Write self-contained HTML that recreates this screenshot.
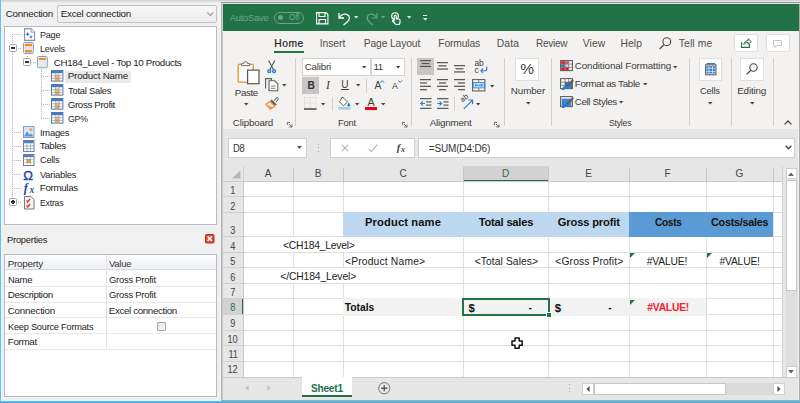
<!DOCTYPE html>
<html lang="en">
<head>
<meta charset="utf-8">
<title>Excel template editor</title>
<style>
html,body{margin:0;padding:0}
body{width:800px;height:403px;position:relative;overflow:hidden;background:#f0f0f0;font-family:"Liberation Sans",sans-serif;color:#222;font-size:9px}
.a{position:absolute;box-sizing:border-box}
.t{position:absolute;white-space:pre;line-height:1}
svg{position:absolute;overflow:visible}
.sep{position:absolute;width:1px;background:#d2d0ce;top:58px;height:68px}
.box{position:absolute;box-sizing:border-box;background:#fff;border:1px solid #c8c8c8}

</style>
</head>
<body>
<svg width="0" height="0" style="left:0;top:0"><defs><linearGradient id="og" x1="0" y1="0" x2="0" y2="1"><stop offset="0" stop-color="#fde3a4"/><stop offset="1" stop-color="#f39a12"/></linearGradient></defs></svg>
<div class="a" style="left:0px;top:0px;width:800px;height:2.5px;background:linear-gradient(#cdd1d7,#eeeff0)"></div>
<div class="a" style="left:0px;top:0px;width:1px;height:403px;background:#5fc2ea"></div>
<div class="a" style="left:1px;top:2px;width:1px;height:399px;background:#f7f1ef"></div>
<div class="a" style="left:0px;top:401.3px;width:800px;height:1.7px;background:linear-gradient(#6fcbf0,#34a0d8)"></div>
<span class="t" style="left:5.75px;top:8.75px;font-size:9.8px;letter-spacing:-0.232px;">Connection</span>
<div class="a" style="left:57px;top:5px;width:160px;height:18px;background:linear-gradient(#f7f7f7,#ededed);border:1px solid #c2c2c2;border-radius:2px"></div>
<span class="t" style="left:60.76px;top:8.75px;font-size:9.8px;letter-spacing:-0.239px;">Excel connection</span>
<svg style="left:206.6px;top:12.3px" width="6.6" height="4.4" viewBox="0 0 6.6 4.4"><path d="M0.4 0.5 L3.3 3.6 L6.2 0.5" fill="none" stroke="#9a9a9a" stroke-width="1.1"/></svg>
<div class="a" style="left:4px;top:26px;width:213px;height:199px;background:#fff;border:1px solid #b4bac6"></div>
<div class="a" style="left:12px;top:34px;width:1px;height:169px;background:repeating-linear-gradient(#bdbdbd 0 1px,#f4f4f4 1px 2px)"></div>
<div class="a" style="left:12px;top:34px;width:10px;height:1px;background:repeating-linear-gradient(90deg,#bdbdbd 0 1px,#f4f4f4 1px 2px)"></div>
<div class="a" style="left:12px;top:48px;width:10px;height:1px;background:repeating-linear-gradient(90deg,#bdbdbd 0 1px,#f4f4f4 1px 2px)"></div>
<div class="a" style="left:12px;top:132px;width:10px;height:1px;background:repeating-linear-gradient(90deg,#bdbdbd 0 1px,#f4f4f4 1px 2px)"></div>
<div class="a" style="left:12px;top:146px;width:10px;height:1px;background:repeating-linear-gradient(90deg,#bdbdbd 0 1px,#f4f4f4 1px 2px)"></div>
<div class="a" style="left:12px;top:160px;width:10px;height:1px;background:repeating-linear-gradient(90deg,#bdbdbd 0 1px,#f4f4f4 1px 2px)"></div>
<div class="a" style="left:12px;top:174px;width:10px;height:1px;background:repeating-linear-gradient(90deg,#bdbdbd 0 1px,#f4f4f4 1px 2px)"></div>
<div class="a" style="left:12px;top:188px;width:10px;height:1px;background:repeating-linear-gradient(90deg,#bdbdbd 0 1px,#f4f4f4 1px 2px)"></div>
<div class="a" style="left:12px;top:202px;width:10px;height:1px;background:repeating-linear-gradient(90deg,#bdbdbd 0 1px,#f4f4f4 1px 2px)"></div>
<div class="a" style="left:27px;top:56px;width:1px;height:6px;background:repeating-linear-gradient(#bdbdbd 0 1px,#f4f4f4 1px 2px)"></div>
<div class="a" style="left:31px;top:62px;width:5px;height:1px;background:repeating-linear-gradient(90deg,#bdbdbd 0 1px,#f4f4f4 1px 2px)"></div>
<div class="a" style="left:41px;top:69px;width:1px;height:50px;background:repeating-linear-gradient(#bdbdbd 0 1px,#f4f4f4 1px 2px)"></div>
<div class="a" style="left:41px;top:76px;width:9px;height:1px;background:repeating-linear-gradient(90deg,#bdbdbd 0 1px,#f4f4f4 1px 2px)"></div>
<div class="a" style="left:41px;top:90px;width:9px;height:1px;background:repeating-linear-gradient(90deg,#bdbdbd 0 1px,#f4f4f4 1px 2px)"></div>
<div class="a" style="left:41px;top:104px;width:9px;height:1px;background:repeating-linear-gradient(90deg,#bdbdbd 0 1px,#f4f4f4 1px 2px)"></div>
<div class="a" style="left:41px;top:118px;width:9px;height:1px;background:repeating-linear-gradient(90deg,#bdbdbd 0 1px,#f4f4f4 1px 2px)"></div>
<div class="a" style="left:9px;top:44px;width:8px;height:8px;background:#fff;border:1px solid #a6a6a6;border-radius:1.5px"></div>
<div class="a" style="left:10.8px;top:47.3px;width:4.4px;height:1.4px;background:#333"></div>
<div class="a" style="left:23px;top:58px;width:8px;height:8px;background:#fff;border:1px solid #a6a6a6;border-radius:1.5px"></div>
<div class="a" style="left:24.8px;top:61.3px;width:4.4px;height:1.4px;background:#333"></div>
<div class="a" style="left:9px;top:198px;width:8px;height:8px;background:#fff;border:1px solid #a6a6a6;border-radius:1.5px"></div>
<div class="a" style="left:10.8px;top:201.3px;width:4.4px;height:1.4px;background:#333"></div>
<div class="a" style="left:12.3px;top:199.8px;width:1.4px;height:4.4px;background:#333"></div>
<div class="a" style="left:65px;top:70.5px;width:66px;height:12.5px;background:#e9e9e9"></div>
<span class="t" style="left:39.76px;top:29.55px;font-size:9.8px;letter-spacing:-0.250px;color:#1e1e28;transform:scaleX(0.925);transform-origin:0 50%;">Page</span>
<span class="t" style="left:39.76px;top:43.65px;font-size:9.8px;letter-spacing:-0.250px;color:#1e1e28;transform:scaleX(0.923);transform-origin:0 50%;">Levels</span>
<span class="t" style="left:53.76px;top:57.55px;font-size:9.8px;letter-spacing:-0.383px;color:#1e1e28;">CH184_Level - Top 10 Products</span>
<span class="t" style="left:67.75px;top:71.45px;font-size:9.8px;letter-spacing:-0.194px;color:#1e1e28;">Product Name</span>
<span class="t" style="left:67.75px;top:85.55px;font-size:9.8px;letter-spacing:-0.250px;color:#1e1e28;transform:scaleX(0.957);transform-origin:0 50%;">Total Sales</span>
<span class="t" style="left:67.75px;top:99.55px;font-size:9.8px;letter-spacing:-0.384px;color:#1e1e28;">Gross Profit</span>
<span class="t" style="left:67.75px;top:113.65px;font-size:9.8px;letter-spacing:-0.250px;color:#1e1e28;transform:scaleX(0.893);transform-origin:0 50%;">GP%</span>
<span class="t" style="left:39.76px;top:127.65px;font-size:9.8px;letter-spacing:-0.250px;color:#1e1e28;transform:scaleX(0.955);transform-origin:0 50%;">Images</span>
<span class="t" style="left:39.76px;top:141.45px;font-size:9.8px;letter-spacing:-0.368px;color:#1e1e28;">Tables</span>
<span class="t" style="left:39.76px;top:155.45px;font-size:9.8px;letter-spacing:-0.250px;color:#1e1e28;transform:scaleX(0.938);transform-origin:0 50%;">Cells</span>
<span class="t" style="left:39.76px;top:169.55px;font-size:9.8px;letter-spacing:-0.250px;color:#1e1e28;transform:scaleX(0.957);transform-origin:0 50%;">Variables</span>
<span class="t" style="left:39.76px;top:183.45px;font-size:9.8px;letter-spacing:-0.336px;color:#1e1e28;">Formulas</span>
<span class="t" style="left:39.76px;top:197.55px;font-size:9.8px;letter-spacing:-0.250px;color:#1e1e28;transform:scaleX(0.886);transform-origin:0 50%;">Extras</span>
<svg style="left:24px;top:28px" width="11.2" height="13" viewBox="0 0 11.2 13"><path d="M0.6 0.6 H7 L10.6 4.2 V12.4 H0.6 Z" fill="#fff" stroke="#8391ad" stroke-width="1.1"/><path d="M7 0.6 V4.2 H10.6" fill="#e8ecf3" stroke="#8391ad" stroke-width="0.8"/><path d="M3.6 3.9 L4.2 5.6 L5.9 6.2 L4.2 6.8 L3.6 8.5 L3 6.8 L1.3 6.2 L3 5.6 Z M7 6.9 L7.5 8.4 L9 8.9 L7.5 9.4 L7 10.9 L6.5 9.4 L5 8.9 L6.5 8.4 Z" fill="#2a50c0"/></svg>
<svg style="left:23.3px;top:42.2px" width="10.8" height="12" viewBox="0 0 10.8 12"><rect x="0.5" y="0.5" width="9.8" height="11" rx="1.2" fill="#f1f4f9" stroke="#8d9bb3"/><rect x="1.7" y="1.7" width="7.4" height="2.5" rx="0.8" fill="#f08a24"/><rect x="1.7" y="7.9" width="7.4" height="2.5" rx="0.8" fill="#f08a24"/><path d="M1.6 5.4 h7.6 M1.6 6.8 h7.6" stroke="#c3ccdb" stroke-width="0.6"/></svg>
<svg style="left:37.3px;top:56.2px" width="10.8" height="12.3" viewBox="0 0 10.8 12.3"><rect x="0.5" y="0.5" width="9.8" height="11.3" rx="1.2" fill="#f1f4f9" stroke="#8d9bb3"/><rect x="1.7" y="1.7" width="7.4" height="2.4" rx="0.8" fill="#f08a24"/><path d="M1.6 5.5 h7.6 M1.6 7.2 h7.6 M1.6 8.9 h7.6 M1.6 10.4 h7.6" stroke="#cdd5e2" stroke-width="0.6"/></svg>
<svg style="left:50.6px;top:70px" width="12.4" height="11.6" viewBox="0 0 12.4 11.6"><rect x="0.5" y="0.5" width="11.4" height="10.6" fill="#fff" stroke="#5f7398"/><rect x="0.6" y="0.6" width="11.2" height="2.6" fill="#3f7ad6"/><rect x="4.3" y="3.2" width="3.8" height="7.6" fill="url(#og)"/><path d="M4.3 3.2 V11 M8.1 3.2 V11 M0.5 5.8 H11.9 M0.5 8.4 H11.9" stroke="#8b9ab5" stroke-width="0.7" fill="none"/></svg>
<svg style="left:50.6px;top:84px" width="12.4" height="11.6" viewBox="0 0 12.4 11.6"><rect x="0.5" y="0.5" width="11.4" height="10.6" fill="#fff" stroke="#5f7398"/><rect x="0.6" y="0.6" width="11.2" height="2.6" fill="#3f7ad6"/><rect x="4.3" y="3.2" width="3.8" height="7.6" fill="url(#og)"/><path d="M4.3 3.2 V11 M8.1 3.2 V11 M0.5 5.8 H11.9 M0.5 8.4 H11.9" stroke="#8b9ab5" stroke-width="0.7" fill="none"/></svg>
<svg style="left:50.6px;top:98px" width="12.4" height="11.6" viewBox="0 0 12.4 11.6"><rect x="0.5" y="0.5" width="11.4" height="10.6" fill="#fff" stroke="#5f7398"/><rect x="0.6" y="0.6" width="11.2" height="2.6" fill="#3f7ad6"/><rect x="4.3" y="3.2" width="3.8" height="7.6" fill="url(#og)"/><path d="M4.3 3.2 V11 M8.1 3.2 V11 M0.5 5.8 H11.9 M0.5 8.4 H11.9" stroke="#8b9ab5" stroke-width="0.7" fill="none"/></svg>
<svg style="left:50.6px;top:112px" width="12.4" height="11.6" viewBox="0 0 12.4 11.6"><rect x="0.5" y="0.5" width="11.4" height="10.6" fill="#fff" stroke="#5f7398"/><rect x="0.6" y="0.6" width="11.2" height="2.6" fill="#3f7ad6"/><rect x="4.3" y="3.2" width="3.8" height="7.6" fill="url(#og)"/><path d="M4.3 3.2 V11 M8.1 3.2 V11 M0.5 5.8 H11.9 M0.5 8.4 H11.9" stroke="#8b9ab5" stroke-width="0.7" fill="none"/></svg>
<svg style="left:23px;top:126px" width="11.5" height="12" viewBox="0 0 11.5 12"><rect x="0.5" y="0.5" width="10.5" height="11" fill="#d6e6f7" stroke="#7f9cc4"/><circle cx="7.8" cy="3.6" r="1.5" fill="#f3a64a"/><path d="M1 10.5 L4 5.5 L6.5 9 L8 7.5 L10.5 10.5 Z" fill="#5b8fd0"/></svg>
<svg style="left:23px;top:140px" width="11.5" height="12" viewBox="0 0 11.5 12"><rect x="0.5" y="0.5" width="10.5" height="11" fill="#fff" stroke="#6b7f9f"/><rect x="1" y="1" width="9.5" height="2.2" fill="#4d7fc9"/><path d="M4 3.2 V11.5 M7.5 3.2 V11.5 M0.5 6 H11 M0.5 8.7 H11" stroke="#8795ad" stroke-width="0.7" fill="none"/></svg>
<svg style="left:23px;top:154px" width="11.5" height="12" viewBox="0 0 11.5 12"><rect x="0.5" y="0.5" width="10.5" height="11" fill="#fff" stroke="#6b7f9f"/><rect x="1" y="1" width="9.5" height="2.2" fill="#4d7fc9"/><path d="M4 3.2 V11.5 M7.6 3.2 V11.5 M0.5 5.6 H11 M0.5 8.6 H11" stroke="#aab4c6" stroke-width="0.6" fill="none"/><rect x="4" y="5.6" width="3.6" height="3" fill="#f4a528" stroke="#b5741a" stroke-width="0.6"/></svg>
<span class="t" style="left:23.34px;top:168.58px;font-size:13px;color:#2343ad;-webkit-text-stroke:0.35px #2343ad;">Ω</span>
<span class="t" style="left:23.80px;top:182.04px;font-size:12.2px;font-weight:700;color:#1f3fa8;font-family:'Liberation Serif', serif;font-style:italic;">f</span>
<span class="t" style="left:29.60px;top:184.97px;font-size:9.6px;font-weight:700;color:#1f3fa8;font-family:'Liberation Serif', serif;font-style:italic;">x</span>
<svg style="left:24px;top:196px" width="10.5" height="13.5" viewBox="0 0 10.5 13.5"><path d="M0.5 0.5 H7 L10 3.5 V13 H0.5 Z" fill="#f4f4f4" stroke="#777"/><path d="M2.5 4.5 l1.2 1.5 l2.3 -3 M2.5 9.5 l1.2 1.5 l2.3 -3" fill="none" stroke="#d23a1e" stroke-width="1.3"/></svg>
<span class="t" style="left:6.75px;top:234.95px;font-size:9.8px;letter-spacing:-0.250px;transform:scaleX(0.955);transform-origin:0 50%;">Properties</span>
<svg style="left:205px;top:234px" width="9.5" height="9.5" viewBox="0 0 9.5 9.5"><rect x="0.5" y="0.5" width="8.5" height="8.5" rx="1" fill="#d9503a" stroke="#a83220"/><path d="M2.6 2.6 L6.9 6.9 M6.9 2.6 L2.6 6.9" stroke="#fff" stroke-width="1.4"/></svg>
<div class="a" style="left:4px;top:254px;width:213px;height:143px;background:#fff;border:1px solid #b4bac6"></div>
<div class="a" style="left:5px;top:255px;width:211px;height:15px;background:linear-gradient(#fdfdfe,#eef0f4);border-bottom:1px solid #d5d9e0"></div>
<div class="a" style="left:106px;top:255px;width:1px;height:94px;background:#dfe2e8"></div>
<div class="a" style="left:5px;top:286px;width:211px;height:1px;background:#e8e8ec"></div>
<div class="a" style="left:5px;top:302px;width:211px;height:1px;background:#e8e8ec"></div>
<div class="a" style="left:5px;top:317px;width:211px;height:1px;background:#e8e8ec"></div>
<div class="a" style="left:5px;top:333px;width:211px;height:1px;background:#e8e8ec"></div>
<div class="a" style="left:5px;top:349px;width:211px;height:1px;background:#e8e8ec"></div>
<span class="t" style="left:7.75px;top:258.85px;font-size:9.8px;letter-spacing:-0.220px;color:#333;">Property</span>
<span class="t" style="left:108.75px;top:258.85px;font-size:9.8px;letter-spacing:-0.250px;color:#333;transform:scaleX(0.963);transform-origin:0 50%;">Value</span>
<span class="t" style="left:7.75px;top:274.55px;font-size:9.8px;letter-spacing:-0.250px;color:#1e1e28;transform:scaleX(0.965);transform-origin:0 50%;">Name</span>
<span class="t" style="left:7.75px;top:290.25px;font-size:9.8px;letter-spacing:-0.353px;color:#1e1e28;">Description</span>
<span class="t" style="left:7.75px;top:305.75px;font-size:9.8px;letter-spacing:-0.232px;color:#1e1e28;">Connection</span>
<span class="t" style="left:7.75px;top:321.55px;font-size:9.8px;letter-spacing:-0.250px;color:#1e1e28;transform:scaleX(0.942);transform-origin:0 50%;">Keep Source Formats</span>
<span class="t" style="left:7.75px;top:337.25px;font-size:9.8px;letter-spacing:-0.308px;color:#1e1e28;">Format</span>
<span class="t" style="left:108.75px;top:274.55px;font-size:9.8px;letter-spacing:-0.250px;color:#1e1e28;transform:scaleX(0.960);transform-origin:0 50%;">Gross Profit</span>
<span class="t" style="left:108.75px;top:290.25px;font-size:9.8px;letter-spacing:-0.250px;color:#1e1e28;transform:scaleX(0.960);transform-origin:0 50%;">Gross Profit</span>
<span class="t" style="left:108.75px;top:305.75px;font-size:9.8px;letter-spacing:-0.373px;color:#1e1e28;">Excel connection</span>
<div class="a" style="left:156.5px;top:322px;width:9px;height:9px;background:linear-gradient(135deg,#e4e4e4,#f8f8f8);border:1px solid #a8a8a8;border-radius:1px"></div>
<div class="a" style="left:221px;top:2px;width:579px;height:1px;background:#9c9c9c"></div>
<div class="a" style="left:221px;top:3px;width:579px;height:1px;background:#e4dede"></div>
<div class="a" style="left:221px;top:2px;width:1px;height:399px;background:#b4b4b4"></div>
<div class="a" style="left:222px;top:3px;width:1px;height:398px;background:#cdc8c8"></div>
<div class="a" style="left:223px;top:4px;width:577px;height:27px;background:#217346"></div>
<div class="a" style="left:223px;top:31px;width:577px;height:98px;background:#f3f2f1"></div>
<div class="a" style="left:223px;top:129px;width:577px;height:37px;background:#e6e6e6"></div>
<div class="a" style="left:221px;top:400px;width:579px;height:1px;background:#a6a6a6"></div>
<span class="t" style="left:229.76px;top:12.69px;font-size:9.4px;letter-spacing:-0.241px;color:#6aa683;">AutoSave</span>
<div class="a" style="left:274px;top:11.5px;width:30px;height:12px;border:1px solid #6aa683;border-radius:6px"></div>
<div class="a" style="left:278px;top:15px;width:5px;height:5px;background:#6aa683;border-radius:3px"></div>
<span class="t" style="left:289.10px;top:14.29px;font-size:8.2px;letter-spacing:-0.236px;color:#6aa683;">Off</span>
<svg style="left:315.5px;top:12px" width="12.5" height="12.5" viewBox="0 0 12.5 12.5"><path d="M0.6 0.6 H10 L11.9 2.5 V11.9 H0.6 Z" fill="none" stroke="#fff" stroke-width="1.1"/><path d="M3 0.6 V4.5 H9 V0.6" fill="none" stroke="#fff" stroke-width="1.1"/><path d="M3 11.9 V7.5 H9.5 V11.9" fill="none" stroke="#fff" stroke-width="1.1"/></svg>
<svg style="left:338px;top:11.5px" width="13" height="13.5" viewBox="0 0 13 13.5"><path d="M1 1 V6 H6" fill="none" stroke="#fff" stroke-width="1.3"/><path d="M1.3 5.7 C3.5 1.8 8.5 0.8 10.8 3.8 C12.8 6.6 10.5 9.5 5.5 13" fill="none" stroke="#fff" stroke-width="1.3"/></svg>
<svg style="left:353.675px;top:16.3675px" width="4.25" height="2.465" viewBox="0 0 4.25 2.465"><path d="M0 0 H4.25 L2.125 2.465 Z" fill="#fff"/></svg>
<svg style="left:366px;top:11.5px" width="12" height="13.5" viewBox="0 0 12 13.5"><path d="M11 1 V6 H6" fill="none" stroke="#6aa683" stroke-width="1.2"/><path d="M10.7 5.7 C8.5 1.8 3.5 0.8 1.7 3.8 C0 6.6 2 9.5 6.5 13" fill="none" stroke="#6aa683" stroke-width="1.2"/></svg>
<svg style="left:381.175px;top:16.3675px" width="4.25" height="2.465" viewBox="0 0 4.25 2.465"><path d="M0 0 H4.25 L2.125 2.465 Z" fill="#6aa683"/></svg>
<svg style="left:391px;top:12px" width="10" height="13" viewBox="0 0 10 13"><circle cx="4" cy="4" r="3.3" fill="none" stroke="#fff" stroke-width="1.1"/><path d="M3.2 9.5 V4 a1 1 0 0 1 2 0 V7 h2.5 a1.3 1.3 0 0 1 1.3 1.3 V10.5 a2 2 0 0 1 -2 2 H4.8 L1.5 9 a0.9 0.9 0 0 1 1.7 -0.5 Z" fill="#217346" stroke="#fff" stroke-width="1.1"/></svg>
<svg style="left:406.675px;top:16.3675px" width="4.25" height="2.465" viewBox="0 0 4.25 2.465"><path d="M0 0 H4.25 L2.125 2.465 Z" fill="#fff"/></svg>
<div class="a" style="left:422.6px;top:15.2px;width:4.8px;height:1.1px;background:#fff"></div>
<svg style="left:422.75px;top:17.895px" width="4.5" height="2.61" viewBox="0 0 4.5 2.61"><path d="M0 0 H4.5 L2.25 2.61 Z" fill="#fff"/></svg>
<span class="t" style="left:274.24px;top:38.86px;font-size:10.3px;letter-spacing:0.515px;color:#252423;-webkit-text-stroke:0.2px #252423;">Home</span>
<div class="a" style="left:274px;top:51px;width:29.5px;height:2px;background:#217346"></div>
<span class="t" style="left:319.74px;top:38.86px;font-size:10.3px;letter-spacing:-0.050px;color:#4f4d4b;">Insert</span>
<span class="t" style="left:363.74px;top:38.86px;font-size:10.3px;letter-spacing:-0.131px;color:#4f4d4b;">Page Layout</span>
<span class="t" style="left:438.24px;top:38.86px;font-size:10.3px;letter-spacing:-0.130px;color:#4f4d4b;">Formulas</span>
<span class="t" style="left:496.74px;top:38.86px;font-size:10.3px;letter-spacing:0.150px;color:#4f4d4b;">Data</span>
<span class="t" style="left:536.14px;top:38.86px;font-size:10.3px;letter-spacing:-0.250px;color:#4f4d4b;transform:scaleX(0.972);transform-origin:0 50%;">Review</span>
<span class="t" style="left:582.74px;top:38.86px;font-size:10.3px;letter-spacing:0.125px;color:#4f4d4b;">View</span>
<span class="t" style="left:620.44px;top:38.86px;font-size:10.3px;letter-spacing:0.109px;color:#4f4d4b;">Help</span>
<span class="t" style="left:678.74px;top:38.86px;font-size:10.3px;letter-spacing:0.148px;color:#4f4d4b;">Tell me</span>
<svg style="left:658.5px;top:37px" width="12.5" height="12.5" viewBox="0 0 12.5 12.5"><circle cx="7.8" cy="4.7" r="3.9" fill="none" stroke="#444" stroke-width="1.1"/><path d="M5 7.6 L0.6 12" stroke="#444" stroke-width="1.3"/></svg>
<div class="a" style="left:734px;top:34px;width:24px;height:18px;background:#fff;border:1px solid #e1dfdd;border-radius:2px"></div>
<svg style="left:740.5px;top:38px" width="11" height="10" viewBox="0 0 11 10"><path d="M0.6 4 V9.4 H8.4 V6" fill="none" stroke="#217346" stroke-width="1.1"/><path d="M2.8 6.5 C3.2 3.8 5 2.8 7 2.8 V0.8 L10.3 3.6 L7 6.3 V4.4 C5.2 4.3 3.8 4.9 2.8 6.5 Z" fill="none" stroke="#217346" stroke-width="1"/></svg>
<div class="a" style="left:765.5px;top:34px;width:24px;height:18px;background:#fff;border:1px solid #e1dfdd;border-radius:2px"></div>
<svg style="left:773px;top:39.5px" width="9" height="8" viewBox="0 0 9 8"><path d="M0.5 0.5 H8.5 V5.5 H4 L2 7.5 V5.5 H0.5 Z" fill="none" stroke="#c8c6c4" stroke-width="1"/></svg>
<div class="sep" style="left:295px"></div>
<div class="sep" style="left:410.5px"></div>
<div class="sep" style="left:503.5px"></div>
<div class="sep" style="left:551px"></div>
<div class="sep" style="left:689px"></div>
<div class="sep" style="left:731px"></div>
<div class="sep" style="left:773px"></div>
<svg style="left:237px;top:60px" width="23" height="25" viewBox="0 0 23 25"><rect x="1.2" y="4.2" width="15" height="18" rx="1" fill="#fbfbfb" stroke="#eda041" stroke-width="1.5"/><path d="M4.6 5.6 V3.6 H6.6 a2 2 0 0 1 4 0 H12.6 V5.6 Z" fill="#fff" stroke="#605e5c" stroke-width="0.9"/><rect x="10.6" y="10.1" width="11.4" height="13.6" fill="#fff" stroke="#555" stroke-width="1.2"/></svg>
<span class="t" style="left:234.75px;top:87.65px;font-size:9.8px;letter-spacing:-0.393px;color:#3b3a39;">Paste</span>
<svg style="left:244.05px;top:102.995px" width="4.5" height="2.61" viewBox="0 0 4.5 2.61"><path d="M0 0 H4.5 L2.25 2.61 Z" fill="#444"/></svg>
<svg style="left:266.8px;top:59.8px" width="9.4" height="13.6" viewBox="0 0 9.4 13.6"><path d="M1.6 0.4 L6.4 9.6 M7.8 0.4 L3 9.6" stroke="#555" stroke-width="1.05" fill="none"/><circle cx="2.3" cy="11.2" r="1.5" fill="#9cc3ee" stroke="#2b7cd3" stroke-width="1.2"/><circle cx="7.1" cy="11.2" r="1.5" fill="#9cc3ee" stroke="#2b7cd3" stroke-width="1.2"/></svg>
<svg style="left:265px;top:78px" width="13.5" height="13.5" viewBox="0 0 13.5 13.5"><path d="M3.5 2.5 V0.6 H8 M0.6 0.6 H3.5" fill="none" stroke="#605e5c" stroke-width="0"/><path d="M0.6 10.5 V0.6 H6.5 V2.8" fill="none" stroke="#605e5c" stroke-width="1.1"/><path d="M4 2.8 H9.8 L12.8 5.8 V12.8 H4 Z" fill="#fff" stroke="#605e5c" stroke-width="1.1"/><path d="M6 8 h4.5 M6 10.3 h4.5" stroke="#605e5c" stroke-width="0.8"/></svg>
<svg style="left:281.75px;top:83.995px" width="4.5" height="2.61" viewBox="0 0 4.5 2.61"><path d="M0 0 H4.5 L2.25 2.61 Z" fill="#444"/></svg>
<svg style="left:265px;top:96.5px" width="14" height="13" viewBox="0 0 14 13"><path d="M9.2 3.6 L11.2 1 a1.2 1.2 0 0 1 1.9 1.4 L11 5.2" fill="#f3f2f1" stroke="#555" stroke-width="1"/><path d="M6.6 2.6 L11.6 7.4 L10.2 8.8 L5.2 4 Z" fill="#555"/><path d="M5 4.4 L9.8 9.2 L5.4 12.2 L0.8 7.4 Z" fill="#fbe3c8" stroke="#e8852c" stroke-width="1.1"/><path d="M1.2 7.4 L5.4 11.8 L7.6 10.4 Z" fill="#ef9a47"/></svg>
<span class="t" style="left:232.75px;top:118.15px;font-size:9.8px;letter-spacing:-0.181px;color:#3b3a39;">Clipboard</span>
<svg style="left:286.5px;top:121.5px" width="5.5" height="5.5" viewBox="0 0 5.5 5.5"><path d="M0.4 3 V0.4 H3" fill="none" stroke="#605e5c" stroke-width="0.9"/><path d="M2 2 L5 5 M5 2.4 V5 H2.4" fill="none" stroke="#605e5c" stroke-width="0.9"/></svg>
<svg style="left:401.5px;top:121.5px" width="5.5" height="5.5" viewBox="0 0 5.5 5.5"><path d="M0.4 3 V0.4 H3" fill="none" stroke="#605e5c" stroke-width="0.9"/><path d="M2 2 L5 5 M5 2.4 V5 H2.4" fill="none" stroke="#605e5c" stroke-width="0.9"/></svg>
<svg style="left:494px;top:121.5px" width="5.5" height="5.5" viewBox="0 0 5.5 5.5"><path d="M0.4 3 V0.4 H3" fill="none" stroke="#605e5c" stroke-width="0.9"/><path d="M2 2 L5 5 M5 2.4 V5 H2.4" fill="none" stroke="#605e5c" stroke-width="0.9"/></svg>
<div class="box" style="left:302px;top:58px;width:69px;height:18px;border-color:#d6d4d2;"></div>
<div class="box" style="left:370.5px;top:58px;width:34px;height:18px;border-color:#d6d4d2;"></div>
<span class="t" style="left:304.75px;top:62.25px;font-size:9.8px;letter-spacing:-0.213px;color:#3b3a39;">Calibri</span>
<span class="t" style="left:373.60px;top:62.25px;font-size:9.8px;color:#3b3a39;letter-spacing:-0.6px;">11</span>
<svg style="left:362.113px;top:66.3312px" width="4.375" height="2.5375" viewBox="0 0 4.375 2.5375"><path d="M0 0 H4.375 L2.1875 2.5375 Z" fill="#444"/></svg>
<svg style="left:395.613px;top:66.3312px" width="4.375" height="2.5375" viewBox="0 0 4.375 2.5375"><path d="M0 0 H4.375 L2.1875 2.5375 Z" fill="#444"/></svg>
<div class="a" style="left:302px;top:77px;width:17.3px;height:16.8px;background:#c8c6c4"></div>
<span class="t" style="left:307.52px;top:80.52px;font-size:10.2px;font-weight:700;color:#333;">B</span>
<span class="t" style="left:326.06px;top:79.80px;font-size:11.6px;color:#3b3a39;font-family:'Liberation Serif', serif;font-style:italic;">I</span>
<span class="t" style="left:341.18px;top:80.34px;font-size:10px;color:#3b3a39;">U</span>
<div class="a" style="left:340.8px;top:89px;width:8.2px;height:1px;background:#3b3a39"></div>
<svg style="left:355.613px;top:84.0312px" width="4.375" height="2.5375" viewBox="0 0 4.375 2.5375"><path d="M0 0 H4.375 L2.1875 2.5375 Z" fill="#444"/></svg>
<div class="a" style="left:366px;top:79px;width:1px;height:14px;background:#d2d0ce"></div>
<span class="t" style="left:374.56px;top:80.76px;font-size:10.3px;color:#3b3a39;">A</span>
<svg style="left:380.3px;top:79.5px" width="4.5" height="3" viewBox="0 0 4.5 3"><path d="M0.4 2.6 L2.25 0.6 L4.1 2.6" fill="none" stroke="#2b7cd3" stroke-width="1"/></svg>
<span class="t" style="left:392.06px;top:82.04px;font-size:8.8px;color:#3b3a39;">A</span>
<svg style="left:398px;top:79.5px" width="4.5" height="3" viewBox="0 0 4.5 3"><path d="M0.4 0.4 L2.25 2.4 L4.1 0.4" fill="none" stroke="#2b7cd3" stroke-width="1"/></svg>
<svg style="left:304px;top:96.5px" width="12.5" height="13" viewBox="0 0 12.5 13"><path d="M0.5 0.5 H12 M0.5 6 H12 M0.5 0.5 V11 M6.2 0.5 V11 M12 0.5 V11" stroke="#c8c6c4" stroke-width="0.7" stroke-dasharray="1 1" fill="none"/><path d="M0 12 H12.5" stroke="#3b3a39" stroke-width="1.4"/></svg>
<svg style="left:321.113px;top:103.031px" width="4.375" height="2.5375" viewBox="0 0 4.375 2.5375"><path d="M0 0 H4.375 L2.1875 2.5375 Z" fill="#444"/></svg>
<div class="a" style="left:332px;top:97px;width:1px;height:14px;background:#d2d0ce"></div>
<svg style="left:338px;top:96px" width="13" height="14" viewBox="0 0 13 14"><path d="M4.5 1 L9.5 6 L5.5 9.8 L1.5 5.8 Z" fill="#fff" stroke="#605e5c" stroke-width="1"/><path d="M4.5 1 L3 2.6" stroke="#605e5c" stroke-width="1"/><path d="M10.8 6.5 c1 1.5 1.3 2.2 1.3 2.8 a1.3 1.3 0 0 1 -2.6 0 c0 -0.6 0.4 -1.3 1.3 -2.8Z" fill="#2b7cd3"/><rect x="0" y="11" width="12.5" height="2.6" fill="#a9cdf0"/></svg>
<svg style="left:355.113px;top:103.031px" width="4.375" height="2.5375" viewBox="0 0 4.375 2.5375"><path d="M0 0 H4.375 L2.1875 2.5375 Z" fill="#444"/></svg>
<span class="t" style="left:367.40px;top:97.27px;font-size:10.8px;color:#3b3a39;">A</span>
<div class="a" style="left:364.5px;top:107px;width:12.5px;height:2.8px;background:#f5000f"></div>
<svg style="left:381.312px;top:103.031px" width="4.375" height="2.5375" viewBox="0 0 4.375 2.5375"><path d="M0 0 H4.375 L2.1875 2.5375 Z" fill="#444"/></svg>
<span class="t" style="left:337.75px;top:118.15px;font-size:9.8px;letter-spacing:-0.250px;color:#3b3a39;transform:scaleX(0.954);transform-origin:0 50%;">Font</span>
<div class="a" style="left:417px;top:57.8px;width:17px;height:17.5px;background:#c8c6c4"></div>
<svg style="left:420px;top:60px" width="11" height="12" viewBox="0 0 11 12"><rect x="0" y="0" width="11" height="1.25" fill="#595755"/><rect x="1.5" y="2.9" width="8" height="1.25" fill="#595755"/><rect x="0" y="5.8" width="11" height="1.25" fill="#595755"/></svg>
<svg style="left:437px;top:62px" width="11" height="12" viewBox="0 0 11 12"><rect x="0" y="0" width="11" height="1.25" fill="#595755"/><rect x="1.5" y="3.2" width="8" height="1.25" fill="#595755"/><rect x="0" y="6.4" width="11" height="1.25" fill="#595755"/></svg>
<svg style="left:454px;top:65.3px" width="11" height="12" viewBox="0 0 11 12"><rect x="0" y="0" width="11" height="1.25" fill="#595755"/><rect x="1.5" y="3.15" width="8" height="1.25" fill="#595755"/><rect x="0" y="6.3" width="11" height="1.25" fill="#595755"/></svg>
<span class="t" style="left:474.40px;top:59.37px;font-size:8.4px;color:#3b3a39;">ab</span>
<span class="t" style="left:474.40px;top:65.87px;font-size:8.4px;color:#3b3a39;">c</span>
<svg style="left:479.5px;top:65.5px" width="8" height="8" viewBox="0 0 8 8"><path d="M6.8 0.5 V3.2 a1.5 1.5 0 0 1 -1.5 1.5 H1.2" fill="none" stroke="#2b7cd3" stroke-width="1.1"/><path d="M3 2.5 L0.9 4.7 L3 6.9" fill="none" stroke="#2b7cd3" stroke-width="1.1"/></svg>
<svg style="left:420px;top:78.9px" width="11" height="12" viewBox="0 0 11 12"><rect x="0" y="0" width="11" height="1.25" fill="#595755"/><rect x="0" y="3.35" width="7" height="1.25" fill="#595755"/><rect x="0" y="6.7" width="11" height="1.25" fill="#595755"/><rect x="0" y="10.05" width="7" height="1.25" fill="#595755"/></svg>
<svg style="left:437px;top:78.9px" width="11" height="12" viewBox="0 0 11 12"><rect x="0" y="0" width="11" height="1.25" fill="#595755"/><rect x="2" y="3.35" width="7" height="1.25" fill="#595755"/><rect x="0" y="6.7" width="11" height="1.25" fill="#595755"/><rect x="2" y="10.05" width="7" height="1.25" fill="#595755"/></svg>
<svg style="left:454px;top:78.9px" width="11" height="12" viewBox="0 0 11 12"><rect x="0" y="0" width="11" height="1.25" fill="#595755"/><rect x="4" y="3.35" width="7" height="1.25" fill="#595755"/><rect x="0" y="6.7" width="11" height="1.25" fill="#595755"/><rect x="4" y="10.05" width="7" height="1.25" fill="#595755"/></svg>
<svg style="left:472px;top:79px" width="13.5" height="12.5" viewBox="0 0 13.5 12.5"><rect x="0.6" y="0.6" width="12.3" height="11.3" fill="#fff" stroke="#605e5c" stroke-width="1.1"/><rect x="1.2" y="3.6" width="11.1" height="5.3" fill="#cfe3f7" stroke="#2b7cd3" stroke-width="0.9"/><path d="M3 6.25 H10.5 M4.5 4.9 L3 6.25 L4.5 7.6 M9 4.9 L10.5 6.25 L9 7.6" stroke="#2b7cd3" stroke-width="0.9" fill="none"/><path d="M6.75 0.6 V3.4 M6.75 9 V11.8" stroke="#605e5c" stroke-width="0.8"/></svg>
<svg style="left:489.812px;top:85.0312px" width="4.375" height="2.5375" viewBox="0 0 4.375 2.5375"><path d="M0 0 H4.375 L2.1875 2.5375 Z" fill="#444"/></svg>
<svg style="left:420px;top:98px" width="11.5" height="11" viewBox="0 0 11.5 11"><path d="M0 0.6 H11.5 M6 3.9 H11.5 M6 7.1 H11.5 M0 10.4 H11.5" stroke="#605e5c" stroke-width="1.1"/><path d="M5 5.5 H0.8 M2.8 3.4 L0.7 5.5 L2.8 7.6" fill="none" stroke="#2b7cd3" stroke-width="1.1"/></svg>
<svg style="left:437px;top:98px" width="11.5" height="11" viewBox="0 0 11.5 11"><path d="M0 0.6 H11.5 M6.5 3.9 H11.5 M6.5 7.1 H11.5 M0 10.4 H11.5" stroke="#605e5c" stroke-width="1.1"/><path d="M0.3 5.5 H4.6 M2.6 3.4 L4.7 5.5 L2.6 7.6" fill="none" stroke="#2b7cd3" stroke-width="1.1"/></svg>
<div class="a" style="left:454px;top:97px;width:1px;height:14px;background:#d2d0ce"></div>
<span class="t" style="left:460.50px;top:97.10px;font-size:7.5px;color:#3b3a39;transform:rotate(-40deg);transform-origin:left center;">ab</span>
<svg style="left:463px;top:99px" width="10.5" height="10.5" viewBox="0 0 10.5 10.5"><path d="M0.8 9.8 L9.3 1.3 M5.3 1 H9.6 V5.3" fill="none" stroke="#2b7cd3" stroke-width="1.2"/></svg>
<svg style="left:476.113px;top:103.031px" width="4.375" height="2.5375" viewBox="0 0 4.375 2.5375"><path d="M0 0 H4.375 L2.1875 2.5375 Z" fill="#444"/></svg>
<span class="t" style="left:429.75px;top:118.15px;font-size:9.8px;letter-spacing:-0.199px;color:#3b3a39;">Alignment</span>
<div class="box" style="left:515px;top:58px;width:23.5px;height:23px;border-color:#e1dfdd;"></div>
<span class="t" style="left:520.30px;top:61.21px;font-size:15.5px;color:#444;">%</span>
<span class="t" style="left:510.75px;top:85.85px;font-size:9.8px;letter-spacing:-0.074px;color:#3b3a39;">Number</span>
<svg style="left:525.75px;top:102.495px" width="4.5" height="2.61" viewBox="0 0 4.5 2.61"><path d="M0 0 H4.5 L2.25 2.61 Z" fill="#444"/></svg>
<svg style="left:559.8px;top:60px" width="13" height="11.2" viewBox="0 0 13 11.2"><rect x="0.6" y="0.6" width="11.8" height="10" fill="#fff" stroke="#605e5c" stroke-width="1.1"/><rect x="1.2" y="1.2" width="3.6" height="2.7" fill="#e81123"/><rect x="5.3" y="1.2" width="3.2" height="2.7" fill="#ef4b59"/><rect x="1.2" y="4.3" width="3.6" height="2.8" fill="#2b7cd3"/><rect x="5.3" y="4.3" width="3.2" height="2.8" fill="#f9c9cd"/><rect x="1.2" y="7.5" width="3.6" height="2.6" fill="#e81123"/><rect x="5.3" y="7.5" width="3.2" height="2.6" fill="#e81123"/><path d="M0.6 4.1 H12.4 M0.6 7.3 H12.4 M5 0.6 V10.6 M8.7 0.6 V10.6" stroke="#605e5c" stroke-width="0.7"/></svg>
<svg style="left:559.8px;top:78px" width="13" height="12" viewBox="0 0 13 12"><rect x="0.6" y="0.6" width="11.8" height="10" fill="#fff" stroke="#605e5c" stroke-width="1.1"/><rect x="5" y="4.1" width="7.2" height="6.3" fill="#2b7cd3"/><path d="M0.6 4.1 H12.4 M0.6 7.3 H5 M5 0.6 V10.6 M8.7 0.6 V4.1" stroke="#605e5c" stroke-width="0.7"/><path d="M12.6 2.6 L5.6 9.4" stroke="#605e5c" stroke-width="2.2" stroke-linecap="round"/><path d="M6.4 8.2 L4.4 10.4 C3.6 11.6 1.8 11.6 1.4 11 C2.6 10.6 2.6 9.6 3.4 8.6 Z" fill="#2b7cd3"/><path d="M6.6 8.6 L3.2 11.2" stroke="#2b7cd3" stroke-width="2" stroke-linecap="round"/></svg>
<svg style="left:559.8px;top:96px" width="13" height="12" viewBox="0 0 13 12"><rect x="0.6" y="0.6" width="11.8" height="10" fill="#fff" stroke="#605e5c" stroke-width="1.1"/><rect x="1.6" y="2.6" width="9.8" height="7.4" fill="#3a86d6"/><path d="M12.6 2.6 L5.6 9.4" stroke="#605e5c" stroke-width="2.2" stroke-linecap="round"/><path d="M6.4 8.2 L4.4 10.4 C3.6 11.6 1.8 11.6 1.4 11 C2.6 10.6 2.6 9.6 3.4 8.6 Z" fill="#2b7cd3"/><path d="M6.6 8.6 L3.2 11.2" stroke="#2b7cd3" stroke-width="2" stroke-linecap="round"/></svg>
<span class="t" style="left:574.75px;top:61.45px;font-size:9.8px;letter-spacing:-0.099px;color:#3b3a39;">Conditional Formatting</span>
<svg style="left:673.112px;top:65.5312px" width="4.375" height="2.5375" viewBox="0 0 4.375 2.5375"><path d="M0 0 H4.375 L2.1875 2.5375 Z" fill="#444"/></svg>
<span class="t" style="left:574.75px;top:79.15px;font-size:9.8px;letter-spacing:-0.327px;color:#3b3a39;">Format as Table</span>
<svg style="left:642.612px;top:83.0312px" width="4.375" height="2.5375" viewBox="0 0 4.375 2.5375"><path d="M0 0 H4.375 L2.1875 2.5375 Z" fill="#444"/></svg>
<span class="t" style="left:574.75px;top:96.85px;font-size:9.8px;letter-spacing:-0.379px;color:#3b3a39;">Cell Styles</span>
<svg style="left:618.612px;top:100.731px" width="4.375" height="2.5375" viewBox="0 0 4.375 2.5375"><path d="M0 0 H4.375 L2.1875 2.5375 Z" fill="#444"/></svg>
<span class="t" style="left:608.75px;top:118.15px;font-size:9.8px;letter-spacing:-0.250px;color:#3b3a39;transform:scaleX(0.884);transform-origin:0 50%;">Styles</span>
<div class="box" style="left:698.5px;top:58px;width:23px;height:22.5px;border-color:#e1dfdd;"></div>
<svg style="left:704.5px;top:63px" width="11.5" height="12.5" viewBox="0 0 11.5 12.5"><rect x="0.6" y="1.8" width="10.3" height="10" fill="#fff" stroke="#605e5c" stroke-width="1.1"/><path d="M0.6 5.2 H10.9 M0.6 8.5 H10.9 M4 1.8 V11.8 M7.5 1.8 V11.8" stroke="#605e5c" stroke-width="0.8"/><rect x="1.4" y="2.9" width="8.7" height="7.6" fill="#3a86d6"/><path d="M1.2 5.2 H10.3 M1.2 8.5 H10.3 M4 2.6 V10.8 M7.5 2.6 V10.8" stroke="#e9f1fb" stroke-width="0.7"/><path d="M1.5 0.5 H10" stroke="#2b7cd3" stroke-width="1"/></svg>
<span class="t" style="left:700.25px;top:85.85px;font-size:9.8px;letter-spacing:-0.250px;color:#3b3a39;transform:scaleX(0.962);transform-origin:0 50%;">Cells</span>
<svg style="left:707.75px;top:102.495px" width="4.5" height="2.61" viewBox="0 0 4.5 2.61"><path d="M0 0 H4.5 L2.25 2.61 Z" fill="#444"/></svg>
<div class="box" style="left:740px;top:58px;width:23.5px;height:22.5px;border-color:#e1dfdd;"></div>
<svg style="left:746px;top:63px" width="12" height="12" viewBox="0 0 12 12"><circle cx="7.5" cy="4.5" r="3.7" fill="none" stroke="#444" stroke-width="1.1"/><path d="M4.8 7.2 L0.6 11.4" stroke="#444" stroke-width="1.3"/></svg>
<span class="t" style="left:737.25px;top:85.85px;font-size:9.8px;letter-spacing:-0.163px;color:#3b3a39;">Editing</span>
<svg style="left:749.75px;top:102.495px" width="4.5" height="2.61" viewBox="0 0 4.5 2.61"><path d="M0 0 H4.5 L2.25 2.61 Z" fill="#444"/></svg>
<svg style="left:784px;top:119.5px" width="8" height="5" viewBox="0 0 8 5"><path d="M0.6 4.4 L4 1 L7.4 4.4" fill="none" stroke="#444" stroke-width="1.3"/></svg>
<div class="box" style="left:227.5px;top:138px;width:79.5px;height:20.3px;border-color:#cfcfcf;"></div>
<span class="t" style="left:233.15px;top:144.13px;font-size:10px;letter-spacing:-0.250px;color:#333;transform:scaleX(0.948);transform-origin:0 50%;">D8</span>
<svg style="left:296.5px;top:146.35px" width="5" height="2.9" viewBox="0 0 5 2.9"><path d="M0 0 H5 L2.5 2.9 Z" fill="#555"/></svg>
<div class="a" style="left:317.6px;top:143.5px;width:1.2px;height:1.2px;background:#a6a6a6"></div>
<div class="a" style="left:317.6px;top:147px;width:1.2px;height:1.2px;background:#a6a6a6"></div>
<div class="a" style="left:317.6px;top:150.5px;width:1.2px;height:1.2px;background:#a6a6a6"></div>
<div class="box" style="left:330px;top:138px;width:85.4px;height:20.3px;border-color:#cfcfcf;"></div>
<svg style="left:341px;top:143.5px" width="8" height="8" viewBox="0 0 8 8"><path d="M0.7 0.7 L7.3 7.3 M7.3 0.7 L0.7 7.3" stroke="#b4b4b4" stroke-width="1.1"/></svg>
<svg style="left:368px;top:143.5px" width="10" height="8" viewBox="0 0 10 8"><path d="M0.7 4.8 L3.4 7.4 L9.3 0.6" fill="none" stroke="#b4b4b4" stroke-width="1.1"/></svg>
<span class="t" style="left:396.80px;top:142.47px;font-size:10.8px;font-weight:700;color:#444;font-family:'Liberation Serif', serif;font-style:italic;">f</span>
<span class="t" style="left:401.00px;top:145.91px;font-size:8px;font-weight:700;color:#444;font-family:'Liberation Serif', serif;font-style:italic;">x</span>
<div class="box" style="left:418px;top:138px;width:377px;height:20.3px;border-color:#cfcfcf;"></div>
<span class="t" style="left:428.75px;top:144.13px;font-size:10px;letter-spacing:-0.158px;color:#333;">=SUM(D4:D6)</span>
<svg style="left:784.5px;top:145px" width="7" height="5" viewBox="0 0 7 5"><path d="M0.6 0.7 L3.5 3.8 L6.4 0.7" fill="none" stroke="#444" stroke-width="1.3"/></svg>
<div class="a" style="left:223px;top:166px;width:560px;height:211px;background:#fff"></div>
<div class="a" style="left:223px;top:166px;width:560px;height:15px;background:#e6e6e6"></div>
<div class="a" style="left:223px;top:181px;width:20px;height:196px;background:#e6e6e6"></div>
<div class="a" style="left:463px;top:166px;width:86px;height:15.4px;background:#d2d2d2;border-bottom:1.6px solid #217346"></div>
<div class="a" style="left:223px;top:298.5px;width:20.4px;height:15.8px;background:#d2d2d2;border-right:1.6px solid #217346"></div>
<div class="a" style="left:243px;top:166px;width:1px;height:15px;background:#d0d0d0"></div>
<div class="a" style="left:293px;top:168px;width:1px;height:13px;background:#c6c6c6"></div>
<div class="a" style="left:343px;top:168px;width:1px;height:13px;background:#c6c6c6"></div>
<div class="a" style="left:463px;top:168px;width:1px;height:13px;background:#c6c6c6"></div>
<div class="a" style="left:548px;top:168px;width:1px;height:13px;background:#c6c6c6"></div>
<div class="a" style="left:629px;top:168px;width:1px;height:13px;background:#c6c6c6"></div>
<div class="a" style="left:706px;top:168px;width:1px;height:13px;background:#c6c6c6"></div>
<div class="a" style="left:773px;top:168px;width:1px;height:13px;background:#c6c6c6"></div>
<div class="a" style="left:223px;top:181px;width:560px;height:1px;background:#c9c9c9"></div>
<div class="a" style="left:243px;top:181px;width:1px;height:196px;background:#c9c9c9"></div>
<svg style="left:230.8px;top:169.5px" width="10" height="9" viewBox="0 0 10 9"><path d="M9.5 0.5 V8.5 H0.5 Z" fill="#b7b7b7"/></svg>
<div class="a" style="left:223px;top:196px;width:20px;height:1px;background:#d0d0d0"></div>
<div class="a" style="left:244px;top:196px;width:538px;height:1px;background:#dedede"></div>
<div class="a" style="left:223px;top:212px;width:20px;height:1px;background:#d0d0d0"></div>
<div class="a" style="left:244px;top:212px;width:538px;height:1px;background:#dedede"></div>
<div class="a" style="left:223px;top:236px;width:20px;height:1px;background:#d0d0d0"></div>
<div class="a" style="left:244px;top:236px;width:538px;height:1px;background:#dedede"></div>
<div class="a" style="left:223px;top:252px;width:20px;height:1px;background:#d0d0d0"></div>
<div class="a" style="left:244px;top:252px;width:538px;height:1px;background:#dedede"></div>
<div class="a" style="left:223px;top:267px;width:20px;height:1px;background:#d0d0d0"></div>
<div class="a" style="left:244px;top:267px;width:538px;height:1px;background:#dedede"></div>
<div class="a" style="left:223px;top:283px;width:20px;height:1px;background:#d0d0d0"></div>
<div class="a" style="left:244px;top:283px;width:538px;height:1px;background:#dedede"></div>
<div class="a" style="left:223px;top:298px;width:20px;height:1px;background:#d0d0d0"></div>
<div class="a" style="left:244px;top:298px;width:538px;height:1px;background:#dedede"></div>
<div class="a" style="left:223px;top:314px;width:20px;height:1px;background:#d0d0d0"></div>
<div class="a" style="left:244px;top:314px;width:538px;height:1px;background:#dedede"></div>
<div class="a" style="left:223px;top:330px;width:20px;height:1px;background:#d0d0d0"></div>
<div class="a" style="left:244px;top:330px;width:538px;height:1px;background:#dedede"></div>
<div class="a" style="left:223px;top:345px;width:20px;height:1px;background:#d0d0d0"></div>
<div class="a" style="left:244px;top:345px;width:538px;height:1px;background:#dedede"></div>
<div class="a" style="left:223px;top:361px;width:20px;height:1px;background:#d0d0d0"></div>
<div class="a" style="left:244px;top:361px;width:538px;height:1px;background:#dedede"></div>
<div class="a" style="left:293px;top:182px;width:1px;height:195px;background:#dedede"></div>
<div class="a" style="left:343px;top:182px;width:1px;height:195px;background:#dedede"></div>
<div class="a" style="left:463px;top:182px;width:1px;height:195px;background:#dedede"></div>
<div class="a" style="left:548px;top:182px;width:1px;height:195px;background:#dedede"></div>
<div class="a" style="left:629px;top:182px;width:1px;height:195px;background:#dedede"></div>
<div class="a" style="left:706px;top:182px;width:1px;height:195px;background:#dedede"></div>
<div class="a" style="left:773px;top:182px;width:1px;height:195px;background:#dedede"></div>
<div class="a" style="left:782px;top:166px;width:1px;height:211px;background:#d0d0d0"></div>
<div class="a" style="left:343px;top:212px;width:286px;height:25px;background:#bdd7ee"></div>
<div class="a" style="left:629px;top:212px;width:144px;height:25px;background:#5b9bd5"></div>
<div class="a" style="left:343px;top:298px;width:363px;height:17.5px;background:#f2f2f2"></div>
<div class="a" style="left:293px;top:237px;width:1px;height:15px;background:#fff"></div>
<div class="a" style="left:343px;top:237px;width:1px;height:15px;background:#fff"></div>
<div class="a" style="left:293px;top:268px;width:1px;height:15px;background:#fff"></div>
<div class="a" style="left:343px;top:268px;width:1px;height:15px;background:#fff"></div>
<span class="t" style="left:264.66px;top:169.44px;font-size:10px;color:#444;">A</span>
<span class="t" style="left:314.66px;top:169.44px;font-size:10px;color:#444;">B</span>
<span class="t" style="left:399.38px;top:169.44px;font-size:10px;color:#444;">C</span>
<span class="t" style="left:585.16px;top:169.44px;font-size:10px;color:#444;">E</span>
<span class="t" style="left:664.45px;top:169.44px;font-size:10px;color:#444;">F</span>
<span class="t" style="left:735.61px;top:169.44px;font-size:10px;color:#444;">G</span>
<span class="t" style="left:501.88px;top:169.44px;font-size:10px;color:#217346;">D</span>
<span class="t" style="left:230.22px;top:186.03px;font-size:10px;color:#444;transform:scaleX(0.92);">1</span>
<span class="t" style="left:230.22px;top:201.53px;font-size:10px;color:#444;transform:scaleX(0.92);">2</span>
<span class="t" style="left:230.22px;top:225.53px;font-size:10px;color:#444;transform:scaleX(0.92);">3</span>
<span class="t" style="left:230.22px;top:241.73px;font-size:10px;color:#444;transform:scaleX(0.92);">4</span>
<span class="t" style="left:230.22px;top:257.33px;font-size:10px;color:#444;transform:scaleX(0.92);">5</span>
<span class="t" style="left:230.22px;top:272.94px;font-size:10px;color:#444;transform:scaleX(0.92);">6</span>
<span class="t" style="left:230.22px;top:287.83px;font-size:10px;color:#444;transform:scaleX(0.92);">7</span>
<span class="t" style="left:230.22px;top:303.44px;font-size:10px;color:#217346;transform:scaleX(0.92);">8</span>
<span class="t" style="left:230.22px;top:318.94px;font-size:10px;color:#444;transform:scaleX(0.92);">9</span>
<span class="t" style="left:227.44px;top:334.53px;font-size:10px;color:#444;transform:scaleX(0.92);">10</span>
<span class="t" style="left:227.80px;top:350.03px;font-size:10px;color:#444;transform:scaleX(0.92);">11</span>
<span class="t" style="left:227.44px;top:365.03px;font-size:10px;color:#444;transform:scaleX(0.92);">12</span>
<span class="t" style="left:365.02px;top:217.03px;font-size:11.2px;letter-spacing:0.114px;font-weight:700;color:#111;">Product name</span>
<span class="t" style="left:478.72px;top:217.03px;font-size:11.2px;letter-spacing:-0.224px;font-weight:700;color:#111;">Total sales</span>
<span class="t" style="left:557.72px;top:217.03px;font-size:11.2px;letter-spacing:-0.161px;font-weight:700;color:#111;">Gross profit</span>
<span class="t" style="left:654.72px;top:217.03px;font-size:11.2px;letter-spacing:-0.250px;font-weight:700;color:#111;transform:scaleX(0.893);transform-origin:0 50%;">Costs</span>
<span class="t" style="left:710.72px;top:217.03px;font-size:11.2px;letter-spacing:-0.250px;font-weight:700;color:#111;transform:scaleX(0.964);transform-origin:0 50%;">Costs/sales</span>
<span class="t" style="left:283.04px;top:241.16px;font-size:10.3px;letter-spacing:-0.226px;">&lt;CH184_Level&gt;</span>
<span class="t" style="left:280.24px;top:272.36px;font-size:10.3px;letter-spacing:-0.099px;">&lt;/CH184_Level&gt;</span>
<span class="t" style="left:344.94px;top:256.56px;font-size:10.3px;letter-spacing:0.175px;">&lt;Product Name&gt;</span>
<span class="t" style="left:474.74px;top:256.56px;font-size:10.3px;letter-spacing:0.076px;">&lt;Total Sales&gt;</span>
<span class="t" style="left:555.34px;top:256.56px;font-size:10.3px;letter-spacing:0.117px;">&lt;Gross Profit&gt;</span>
<span class="t" style="left:646.74px;top:256.56px;font-size:10.3px;letter-spacing:-0.180px;">#VALUE!</span>
<span class="t" style="left:719.44px;top:256.56px;font-size:10.3px;letter-spacing:-0.180px;">#VALUE!</span>
<span class="t" style="left:647.24px;top:303.36px;font-size:10.3px;letter-spacing:-0.214px;font-weight:700;color:#f2222e;">#VALUE!</span>
<span class="t" style="left:344.74px;top:303.36px;font-size:10.3px;letter-spacing:-0.009px;font-weight:700;color:#111;">Totals</span>
<span class="t" style="left:468.60px;top:302.97px;font-size:11.3px;font-weight:700;color:#111;">$</span>
<span class="t" style="left:528.50px;top:303.36px;font-size:10.3px;font-weight:700;color:#111;">-</span>
<span class="t" style="left:554.80px;top:302.97px;font-size:11.3px;font-weight:700;color:#111;">$</span>
<span class="t" style="left:608.20px;top:303.36px;font-size:10.3px;font-weight:700;color:#111;">-</span>
<svg style="left:630px;top:253px" width="5" height="5" viewBox="0 0 5 5"><path d="M0 0 H5 L0 5 Z" fill="#1e7a3c"/></svg>
<svg style="left:707px;top:253px" width="5" height="5" viewBox="0 0 5 5"><path d="M0 0 H5 L0 5 Z" fill="#1e7a3c"/></svg>
<svg style="left:630px;top:299.5px" width="5" height="5" viewBox="0 0 5 5"><path d="M0 0 H5 L0 5 Z" fill="#1e7a3c"/></svg>
<div class="a" style="left:462px;top:298px;width:88px;height:18px;border:2px solid #217346"></div>
<div class="a" style="left:546px;top:312px;width:6px;height:6px;background:#217346;border:1px solid #fff"></div>
<svg style="left:510.7px;top:337px" width="12.2" height="12.2" viewBox="0 0 12.2 12.2"><path d="M4 1 H8.2 V4 H11.2 V8.2 H8.2 V11.2 H4 V8.2 H1 V4 H4 Z" fill="#fff" stroke="#111" stroke-width="1.5" stroke-linejoin="round"/></svg>
<div class="a" style="left:783px;top:166px;width:17px;height:211px;background:#e6e6e6"></div>
<div class="box" style="left:785.5px;top:168px;width:11px;height:11px;border-color:#cfcfcf;"></div>
<svg style="left:788px;top:171.5px" width="6" height="4" viewBox="0 0 6 4"><path d="M0 4 L3 0.5 L6 4 Z" fill="#666"/></svg>
<div class="box" style="left:785.5px;top:179.5px;width:11px;height:111px;border-color:#c6c6c6;"></div>
<div class="a" style="left:785.5px;top:290.5px;width:11px;height:75.5px;background:#dedede"></div>
<div class="box" style="left:785.5px;top:366px;width:11px;height:11.5px;border-color:#cfcfcf;"></div>
<svg style="left:788px;top:370px" width="6" height="4" viewBox="0 0 6 4"><path d="M0 0 L3 3.5 L6 0 Z" fill="#666"/></svg>
<div class="a" style="left:223px;top:377px;width:577px;height:23px;background:#e6e6e6"></div>
<div class="a" style="left:223px;top:377px;width:577px;height:1px;background:#c9c9c9"></div>
<svg style="left:244.5px;top:384.5px" width="4" height="6" viewBox="0 0 4 6"><path d="M3.6 0 L0.4 3 L3.6 6 Z" fill="#c2c2c2"/></svg>
<svg style="left:266.5px;top:384.5px" width="4" height="6" viewBox="0 0 4 6"><path d="M0.4 0 L3.6 3 L0.4 6 Z" fill="#c2c2c2"/></svg>
<div class="a" style="left:302px;top:377px;width:50px;height:20px;background:#fff;border-bottom:2px solid #217346"></div>
<span class="t" style="left:310.73px;top:382.67px;font-size:10.8px;letter-spacing:-0.250px;font-weight:700;color:#217346;transform:scaleX(0.938);transform-origin:0 50%;">Sheet1</span>
<svg style="left:378px;top:382px" width="12.5" height="12.5" viewBox="0 0 12.5 12.5"><circle cx="6.25" cy="6.25" r="5.6" fill="none" stroke="#777" stroke-width="1"/><path d="M6.25 3.2 V9.3 M3.2 6.25 H9.3" stroke="#555" stroke-width="1.3"/></svg>
<div class="a" style="left:569px;top:384px;width:1.2px;height:1.2px;background:#a6a6a6"></div>
<div class="a" style="left:569px;top:387.5px;width:1.2px;height:1.2px;background:#a6a6a6"></div>
<div class="a" style="left:569px;top:391px;width:1.2px;height:1.2px;background:#a6a6a6"></div>
<div class="box" style="left:582px;top:383px;width:11.5px;height:11.5px;border-color:#cfcfcf;"></div>
<svg style="left:585.5px;top:385.7px" width="4" height="6" viewBox="0 0 4 6"><path d="M3.6 0 L0.4 3 L3.6 6 Z" fill="#555"/></svg>
<div class="box" style="left:593.5px;top:383px;width:132.5px;height:11.5px;border-color:#c6c6c6;"></div>
<div class="a" style="left:726px;top:383px;width:46.5px;height:11.5px;background:#dadada"></div>
<div class="box" style="left:772.5px;top:383px;width:12px;height:11.5px;border-color:#cfcfcf;"></div>
<svg style="left:777px;top:385.7px" width="4" height="6" viewBox="0 0 4 6"><path d="M0.4 0 L3.6 3 L0.4 6 Z" fill="#555"/></svg>
<div class="a" style="left:798px;top:129px;width:1px;height:271px;background:#f0f0f0"></div>
<div class="a" style="left:799px;top:4px;width:1px;height:397px;background:#aaaaaa"></div>
</body>
</html>
